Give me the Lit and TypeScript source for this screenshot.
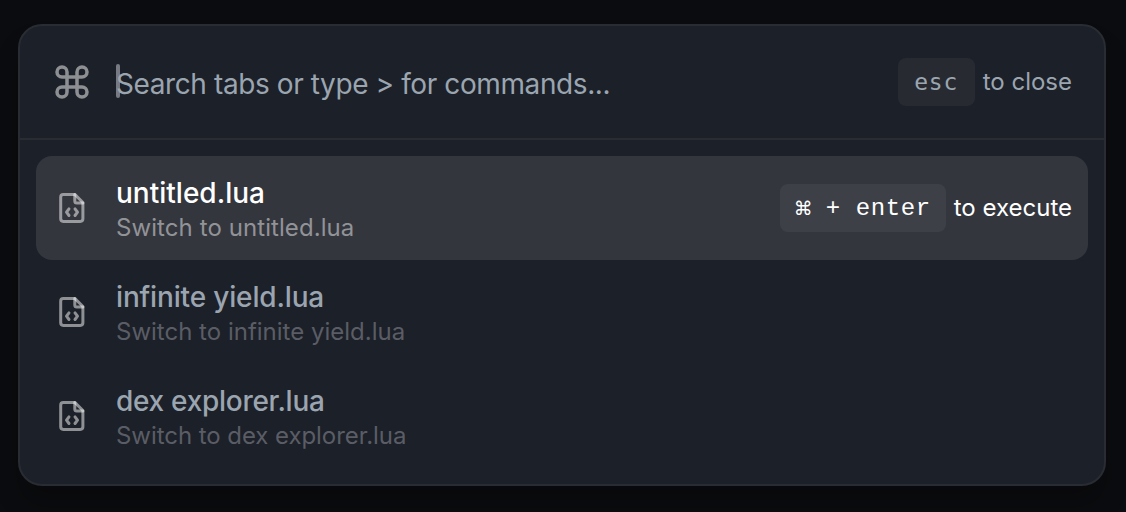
import { LitElement, html, css, svg } from "lit";
import { customElement, property, state } from "lit/decorators.js";
import { classMap } from "lit/directives/class-map.js";
import { styleMap } from "lit/directives/style-map.js";

const commandIcon = html`<svg width="40" height="40" viewBox="0 0 24 24" fill="none" stroke="currentColor" stroke-width="2.1" stroke-linecap="round" stroke-linejoin="round">
  ${svg`<path d="M15 6v12a3 3 0 1 0 3-3H6a3 3 0 1 0 3 3V6a3 3 0 1 0-3 3h12a3 3 0 1 0-3-3"/>`}
</svg>`;

const fileCodeIcon = html`<svg width="32" height="32" viewBox="0 0 32 32" fill="none" stroke="currentColor" stroke-opacity="0.5" stroke-width="3" stroke-linecap="round" stroke-linejoin="round">
  ${svg`<path d="M19 2.600H7.300a2.600 2.600 0 0 0-2.600 2.600v21.600a2.600 2.600 0 0 0 2.600 2.600h17a2.600 2.600 0 0 0 2.600-2.600V10.500z"/>
  <path d="M18.800 2.600v6.400a2 2 0 0 0 2 2h6.100"/>
  <path d="M13 16.900l-2.500 3.300 2.500 3.300M19 16.900l2.500 3.300-2.500 3.300"/>`}
</svg>`;

interface FileEntry {
  name: string;
  tracking: number;
}

@customElement("palette-row")
class PaletteRow extends LitElement {
  @property({ attribute: false }) file!: FileEntry;
  @property({ type: Boolean }) active = false;

  static styles = css`
    :host { display: block; }
    .row {
      display: flex; align-items: center; box-sizing: border-box;
      height: 104px; padding: 0 16px 0 20px; border-radius: 16px;
      color: #9ba5b0;
    }
    .active { background: #34363e; color: #fff; }
    .icon { display: flex; width: 32px; height: 32px; margin-right: 28px; color: #fff; }
    .text { flex: 1; white-space: nowrap; }
    .title { font-size: 28px; line-height: 40px; padding-top: 1px; margin-bottom: -1px; font-weight: 500; }
    .sub { font-size: 24px; line-height: 32px; color: #5a5d65; }
    .active .sub { color: #929397; }
    .hint { display: flex; align-items: center; gap: 8px; font-size: 24px; white-space: nowrap; }
    .label { padding-bottom: 2px; }
    .key {
      display: flex; align-items: center; box-sizing: border-box; height: 48px; width: 166px; padding: 0 14px;
      border-radius: 8px; background: #3e4048; white-space: pre;
      font-family: "Liberation Mono", monospace; letter-spacing: 0.6px;
    }
    .cmd { width: 20px; margin-right: 12px; font: 19px "DejaVu Sans", sans-serif; letter-spacing: 0; }
  `;

  render() {
    const t = this.file.tracking;
    return html`<div class=${classMap({ row: true, active: this.active })}>
      <span class="icon">${fileCodeIcon}</span>
      <div class="text">
        <div class="title" style=${styleMap({ letterSpacing: `${t}px` })}>${this.file.name}</div>
        <div class="sub" style=${styleMap({ letterSpacing: `${t / 2 + 0.08}px` })}>Switch to ${this.file.name}</div>
      </div>
      ${this.active
        ? html`<div class="hint"><span class="key"><span class="cmd">⌘</span><span>+ enter</span></span><span class="label">to execute</span></div>`
        : null}
    </div>`;
  }
}

@customElement("app-root")
class AppRoot extends LitElement {
  @state() private files: FileEntry[] = [
    { name: "untitled.lua", tracking: 0 },
    { name: "infinite yield.lua", tracking: -0.16 },
    { name: "dex explorer.lua", tracking: -0.28 },
  ];

  static styles = css`
    :host {
      display: block; box-sizing: border-box; height: 512px; padding: 24px 20px 26px 18px;
      background: #0b0c0f; overflow: hidden;
      font-family: Inter, sans-serif;
    }
    .panel {
      box-sizing: border-box; height: 462px;
      border: 2px solid #2a2c33; border-radius: 24px; background: #1c2028;
      box-shadow: 0 20px 24px rgba(0, 0, 0, 0.2);
    }
    .search {
      display: flex; align-items: center; box-sizing: border-box; height: 114px;
      padding: 0 32px 0 32px; border-bottom: 2px solid #2a2c33; color: #9ba5b0;
    }
    .icon { display: flex; margin-right: 24px; color: #8e8f93; }
    .caret { width: 4px; height: 34px; margin-right: -4px; margin-top: -2px; border-radius: 2px; background: #777a82; }
    .placeholder { flex: 1; font-size: 28px; letter-spacing: -0.4px; white-space: nowrap; padding-top: 4px; }
    .hint { display: flex; align-items: center; gap: 8px; font-size: 24px; letter-spacing: 0; white-space: nowrap; }
    .label { padding-bottom: 2px; }
    .key {
      display: flex; align-items: center; justify-content: center; width: 77px; height: 48px;
      border-radius: 8px; background: #282a32; font-family: "DejaVu Sans Mono", monospace; font-size: 23px; letter-spacing: 0.8px;
    }
    .list { padding: 16px; }
  `;

  render() {
    return html`<div class="panel">
      <div class="search">
        <span class="icon">${commandIcon}</span>
        <span class="caret"></span>
        <span class="placeholder">Search tabs or type &gt; for commands...</span>
        <div class="hint"><span class="key">esc</span><span class="label">to close</span></div>
      </div>
      <div class="list">
        ${this.files.map((f, i) => html`<palette-row .file=${f} ?active=${i === 0}></palette-row>`)}
      </div>
    </div>`;
  }
}
